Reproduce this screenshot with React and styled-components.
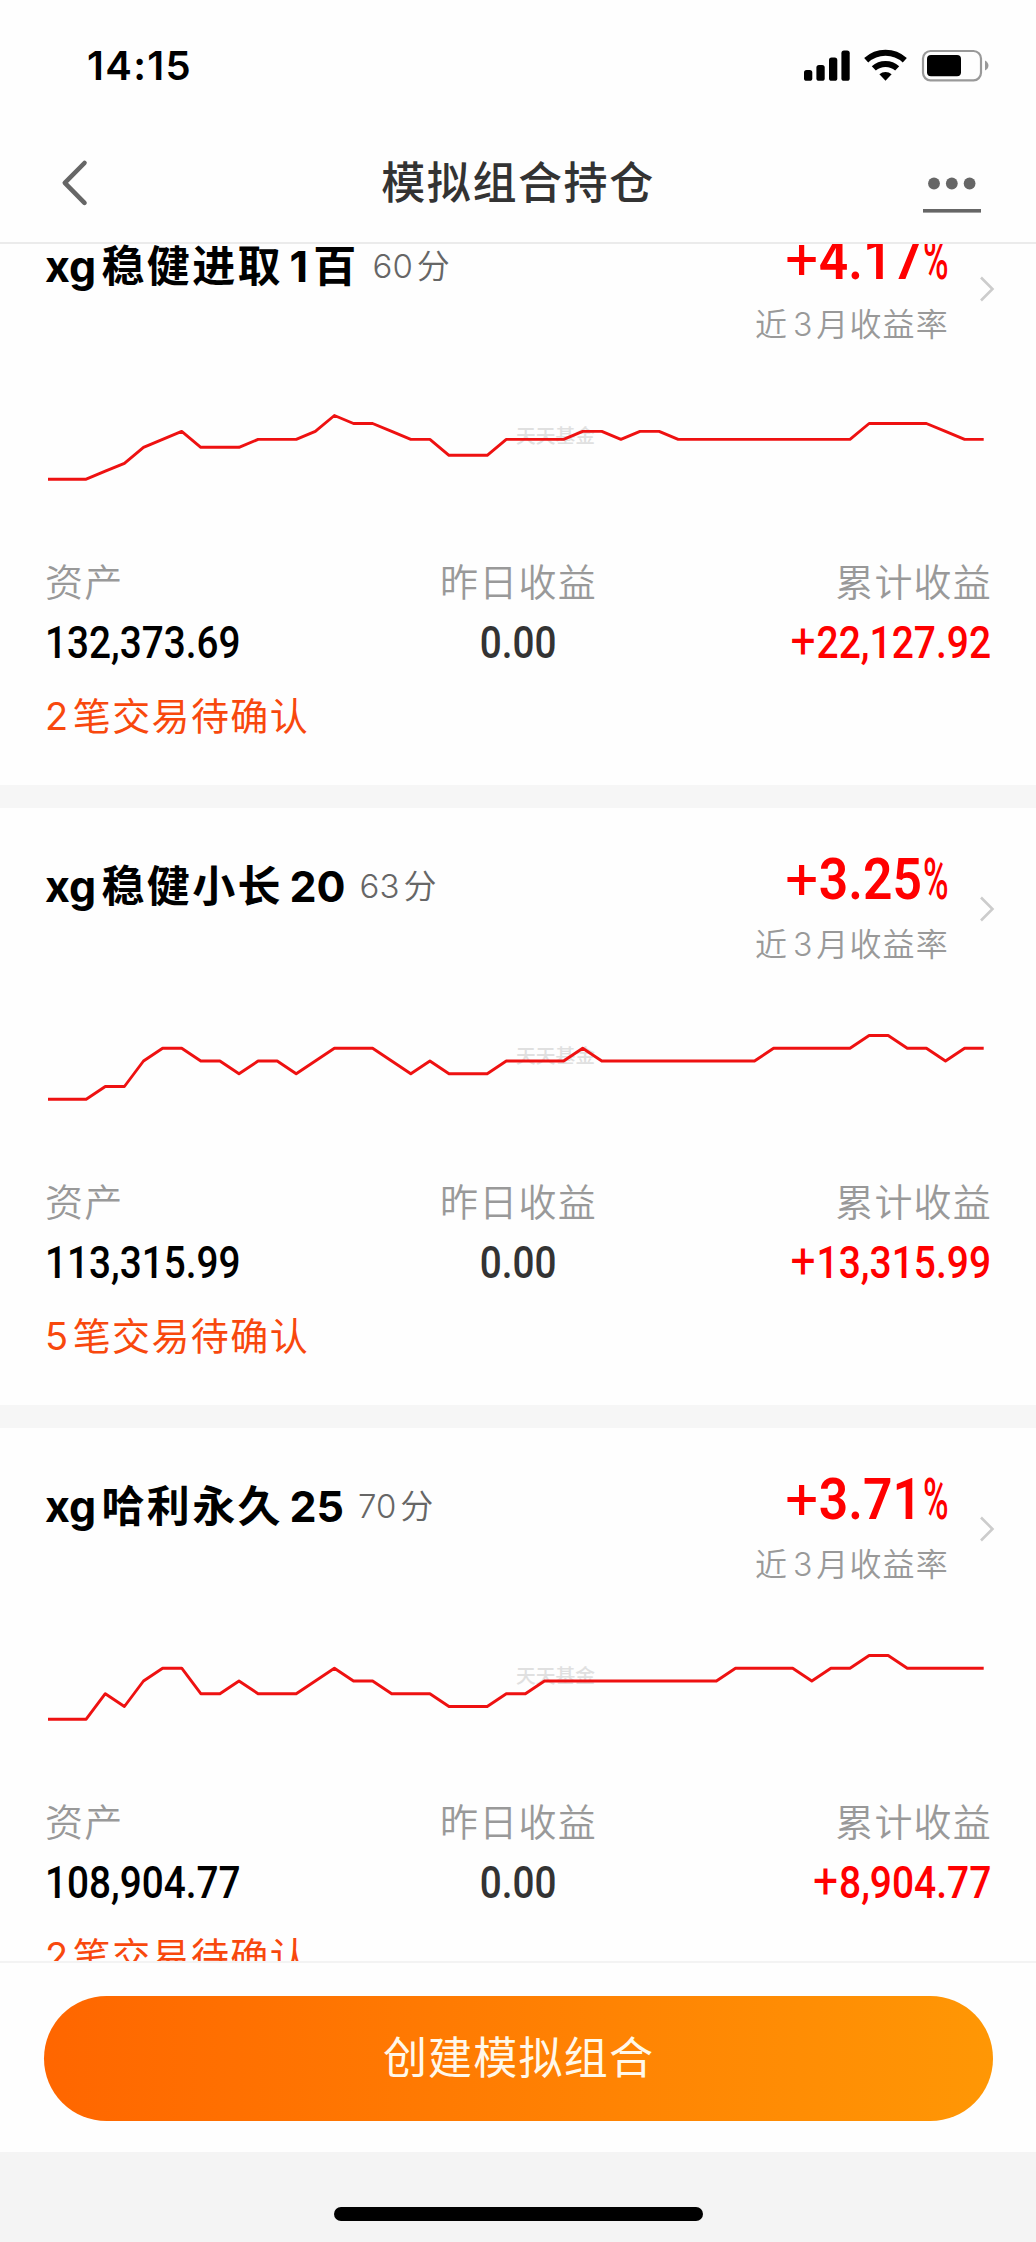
import styled, { createGlobalStyle } from "styled-components";

const GlobalStyle = createGlobalStyle`
  *, *::before, *::after {
    box-sizing: border-box;
  }

  body {
    margin: 0;
    background: #fefefe;
    font-family: Inter, "Noto Sans CJK SC", sans-serif;
  }
`;

const Screen = styled.div`
  width: 1036px;
  height: 2242px;
  display: flex;
  flex-direction: column;
  overflow: hidden;
  background: #fefefe;
`;

const StatusBar = styled.div`
  height: 125px;
  padding: 36px 47px 0 87px;
  display: flex;
  align-items: flex-start;
  justify-content: space-between;
`;

const Clock = styled.div`
  font-size: 40px;
  font-weight: 600;
  line-height: 60px;
  letter-spacing: 1.3px;
  color: #000;
`;

const StatusIcons = styled.svg`
  display: block;
  margin-top: 8px;
`;

const NavBar = styled.header`
  height: 119px;
  padding: 0 50px;
  display: grid;
  grid-template-columns: 80px 1fr 80px;
  align-items: start;
  border-bottom: 2px solid #ebebeb;
`;

const BackIcon = styled.svg`
  display: block;
  margin: 34px 0 0 9px;
`;

const MoreIcon = styled.svg`
  display: block;
  margin: 47px 0 0 11px;
  justify-self: center;
`;

const PageTitle = styled.h1`
  margin: 26px 0 0;
  font-size: 44px;
  font-weight: 500;
  line-height: 64px;
  letter-spacing: 1.6px;
  text-align: center;
  color: #333;
`;

const List = styled.main`
  flex: 1;
  min-height: 0;
  overflow: hidden;
  background: #f6f6f6;
`;

const Scrolled = styled.div`
  display: flex;
  flex-direction: column;
  gap: 23px;
  margin-top: -56.5px;
`;

const Card = styled.section`
  height: 597px;
  padding: 40px 45px 0;
  background: #fefefe;
`;

const CardTop = styled.div`
  height: 121px;
  display: flex;
  align-items: flex-start;
`;

const NameRow = styled.div`
  flex: 1;
  display: flex;
  align-items: baseline;
  padding-top: 8px;
`;

const Name = styled.h2`
  margin: 0;
  font-size: 43px;
  font-weight: 700;
  line-height: 60px;
  letter-spacing: 2.4px;
  color: #000;
`;

const Score = styled.span`
  margin-left: 14px;
  font-size: 33px;
  font-weight: 350;
  line-height: 48px;
  color: #666;
  transform: translateY(-4px);
`;

const Latin = styled.span`
  letter-spacing: 0;
  margin-left: ${({ $lead }) => ($lead ? "0.15em" : 0)};
  margin-right: ${({ $trail }) => ($trail ? "0.12em" : 0)};
`;

const ReturnBox = styled.div`
  display: flex;
  flex-direction: column;
  align-items: flex-end;
  gap: 9px;
`;

const ReturnValue = styled.div`
  height: 64px;
  display: flex;
  font-family: Roboto, sans-serif;
  font-size: 58px;
  font-weight: 600;
  line-height: 63px;
  color: #f00;
`;

const ReturnSign = styled.span`
  margin-right: -12px;
  font-weight: 450;
`;

const ReturnDigits = styled.span`
  transform: scaleX(0.89);
  transform-origin: right;
`;

const Percent = styled.span`
  width: 26px;
  margin-left: 1px;
  font-weight: 500;
  transform: scaleX(0.6);
  transform-origin: left;
`;

const ReturnLabel = styled.div`
  font-size: 32px;
  font-weight: 350;
  line-height: 48px;
  letter-spacing: 1.2px;
  color: #999;
`;

const Arrow = styled.svg`
  display: block;
  margin: 47px -4px 0 30px;
`;

const Chart = styled.svg`
  display: block;
  width: 944px;
  height: 180px;
  margin-left: 1px;
`;

const Stats = styled.div`
  margin-top: 29px;
  display: grid;
  grid-template-columns: repeat(3, 1fr);
`;

const Stat = styled.div`
  display: flex;
  flex-direction: column;
  align-items: ${({ $align }) => $align};
  gap: 14px;
`;

const StatLabel = styled.div`
  font-size: 38px;
  font-weight: 350;
  line-height: 48px;
  letter-spacing: 1.2px;
  margin-right: -1px;
  color: #999;
`;

const StatValue = styled.div`
  height: 48px;
  font-family: Roboto, sans-serif;
  font-size: 43.5px;
  font-weight: 500;
  line-height: 48px;
  color: ${({ $color }) => $color};
  transform: scaleX(${({ $squeeze }) => $squeeze || 0.89});
  transform-origin: ${({ $origin }) => $origin};
`;

const StatSign = styled.span`
  margin-right: 1px;
  font-size: 1.14em;
  font-weight: 400;
  line-height: 0;
`;

const Pending = styled.div`
  margin-top: 24px;
  font-size: 38px;
  line-height: 48px;
  letter-spacing: 1.4px;
  color: #f8480d;
`;

const Footer = styled.footer`
  height: 191px;
  padding: 33px 43px 0 44px;
  border-top: 2px solid #f3f3f3;
`;

const CreateButton = styled.button`
  width: 100%;
  height: 125px;
  display: flex;
  align-items: center;
  justify-content: center;
  border: 0;
  border-radius: 63px;
  padding: 0 0 8px;
  background: linear-gradient(90deg, #ff6600, #ff9705);
  font-family: inherit;
  font-size: 44px;
  font-weight: 400;
  letter-spacing: 1.2px;
  color: #fff8ea;
`;

const HomeArea = styled.div`
  height: 90px;
  padding-top: 55px;
  background: #f4f4f4;
`;

const HomeIndicator = styled.div`
  width: 369px;
  height: 14px;
  margin: 0 auto;
  border-radius: 7px;
  background: #000;
`;

const portfolios = [
  {
    name: "xg稳健进取1百",
    score: "60分",
    rate: "4.17",
    asset: "132,373.69",
    total: "22,127.92",
    pending: "2笔交易待确认",
    trend: [
      0, 0, 0, 1, 2, 4, 5, 6, 4, 4, 4, 5, 5, 5, 6, 8, 7, 7, 6, 5, 5, 3, 3, 3, 5,
      5, 5, 5, 6, 6, 5, 6, 6, 5, 5, 5, 5, 5, 5, 5, 5, 5, 5, 7, 7, 7, 7, 6, 5, 5,
    ],
  },
  {
    name: "xg稳健小长20",
    score: "63分",
    rate: "3.25",
    asset: "113,315.99",
    total: "13,315.99",
    pending: "5笔交易待确认",
    trend: [
      0, 0, 0, 1, 1, 3, 4, 4, 3, 3, 2, 3, 3, 2, 3, 4, 4, 4, 3, 2, 3, 2, 2, 2, 3,
      3, 3, 3, 4, 3, 3, 3, 3, 3, 3, 3, 3, 3, 4, 4, 4, 4, 4, 5, 5, 4, 4, 3, 4, 4,
    ],
  },
  {
    name: "xg哈利永久25",
    score: "70分",
    rate: "3.71",
    asset: "108,904.77",
    total: "8,904.77",
    pending: "2笔交易待确认",
    trend: [
      0, 0, 0, 2, 1, 3, 4, 4, 2, 2, 3, 2, 2, 2, 3, 4, 3, 3, 2, 2, 2, 1, 1, 1, 2,
      2, 3, 3, 3, 3, 3, 3, 3, 3, 3, 3, 4, 4, 4, 4, 3, 4, 4, 5, 5, 4, 4, 4, 4, 4,
    ],
  },
];

// Adds a little air between latin runs and the Chinese text around them
const Mixed = ({ text }) => {
  const parts = text.split(/([A-Za-z0-9]+)/).filter(Boolean);
  return parts.map((part, i) =>
    /[A-Za-z0-9]/.test(part) ? (
      <Latin key={i} $lead={i > 0} $trail={i < parts.length - 1}>
        {part}
      </Latin>
    ) : (
      part
    )
  );
};

const TrendChart = ({ trend }) => {
  const max = Math.max(...trend);
  const stepX = 935.7 / (trend.length - 1);
  const points = trend
    .map((v, i) => `${(2 + i * stepX).toFixed(1)},${(130.2 - (v / max) * 63.7).toFixed(1)}`)
    .join(" ");

  return (
    <Chart viewBox="0 0 944 180">
      <text
        x="470"
        y="94"
        fontSize="19.8"
        fontWeight="500"
        fontFamily='"Noto Sans CJK SC", sans-serif'
        fill="#e0e0e0"
      >
        天天基金
      </text>
      <polyline points={points} fill="none" stroke="#ee1111" strokeWidth="2.9" strokeLinejoin="round" />
    </Chart>
  );
};

const PortfolioCard = ({ item }) => (
  <Card>
    <CardTop>
      <NameRow>
        <Name>
          <Mixed text={item.name} />
        </Name>
        <Score>
          <Mixed text={item.score} />
        </Score>
      </NameRow>
      <ReturnBox>
        <ReturnValue>
          <ReturnSign>+</ReturnSign>
          <ReturnDigits>{item.rate}</ReturnDigits>
          <Percent>%</Percent>
        </ReturnValue>
        <ReturnLabel>
          <Mixed text="近3月收益率" />
        </ReturnLabel>
      </ReturnBox>
      <Arrow width="16" height="28" viewBox="0 0 16 28" fill="none" stroke="#ccc" strokeWidth="2.6">
        <path d="M2 2.5 13.5 14 2 25.5" />
      </Arrow>
    </CardTop>
    <TrendChart trend={item.trend} />
    <Stats>
      <Stat $align="flex-start">
        <StatLabel>资产</StatLabel>
        <StatValue $color="#000" $origin="left">{item.asset}</StatValue>
      </Stat>
      <Stat $align="center">
        <StatLabel>昨日收益</StatLabel>
        <StatValue $color="#333" $origin="center">0.00</StatValue>
      </Stat>
      <Stat $align="flex-end">
        <StatLabel>累计收益</StatLabel>
        <StatValue $color="#f00" $origin="right" $squeeze={0.895}>
          <StatSign>+</StatSign>
          {item.total}
        </StatValue>
      </Stat>
    </Stats>
    <Pending>
      <Mixed text={item.pending} />
    </Pending>
  </Card>
);

const App = () => {
  return (
    <>
      <GlobalStyle />
      <Screen>
        <StatusBar>
          <Clock>14:15</Clock>
          <StatusIcons width="186" height="44" viewBox="802 44 186 44">
            <rect x="803" y="70" width="8.3" height="10.8" rx="2.6" />
            <rect x="815.4" y="65" width="8.3" height="15.8" rx="2.6" />
            <rect x="828" y="57.6" width="8.3" height="23.2" rx="2.6" />
            <rect x="840.4" y="50.6" width="8.3" height="30.2" rx="2.6" />
            <g fill="none" stroke="#000" strokeWidth="6">
              <path d="M865.2 60.2a28.5 28.5 0 0 1 38.6 0" />
              <path d="M872.8 68.4a17.4 17.4 0 0 1 23.4 0" />
            </g>
            <path d="M878.4 74.3a9.2 9.2 0 0 1 12.2 0L884.5 80.8z" />
            <rect x="922" y="51" width="58" height="29.3" rx="7.5" fill="none" stroke="#999" strokeWidth="2.2" />
            <rect x="926" y="55" width="34" height="21.2" rx="4" />
            <path d="M984 60.6c4.6 2 4.6 8 0 10z" fill="#999" />
          </StatusIcons>
        </StatusBar>
        <NavBar>
          <BackIcon
            width="32"
            height="50"
            viewBox="0 0 32 50"
            fill="none"
            stroke="#666"
            strokeWidth="4.6"
            strokeLinecap="round"
            strokeLinejoin="round"
          >
            <path d="M25.5 4 5.8 23.8 25.5 43.8" />
          </BackIcon>
          <PageTitle>模拟组合持仓</PageTitle>
          <MoreIcon width="58" height="42" viewBox="0 0 58 42" fill="#666">
            <circle cx="11" cy="11.5" r="5.9" />
            <circle cx="28.8" cy="11.5" r="5.9" />
            <circle cx="46.6" cy="11.5" r="5.9" />
            <rect x="0" y="37" width="58" height="3.6" />
          </MoreIcon>
        </NavBar>
        <List>
          <Scrolled>
            {portfolios.map((item) => (
              <PortfolioCard key={item.name} item={item} />
            ))}
          </Scrolled>
        </List>
        <Footer>
          <CreateButton type="button">创建模拟组合</CreateButton>
        </Footer>
        <HomeArea>
          <HomeIndicator />
        </HomeArea>
      </Screen>
    </>
  );
};

export default App;
